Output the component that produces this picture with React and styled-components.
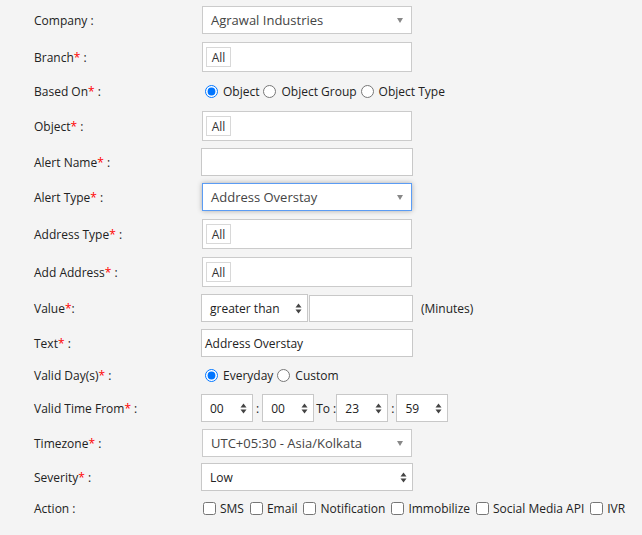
import React from "react";
import styled, { createGlobalStyle, css } from "styled-components";

const Global = createGlobalStyle`
  html, body { margin: 0; padding: 0; background: #f4f4f4; }
  body { font-family: "Open Sans", "Noto Sans", Arial, sans-serif; color: #222; }
`;

const Form = styled.div`
  display: flex;
  flex-direction: column;
  padding: 6px 0 0 34px;
  width: 608px;
  height: 529px;
  background: #f4f4f4;
`;

const Row = styled.div`
  display: flex;
  align-items: center;
  height: ${(p) => p.$h}px;
  margin-bottom: ${(p) => p.$mb || 0}px;
`;

const Label = styled.div`
  width: 167px;
  flex: none;
  font-size: 12px;
  color: #222;
  white-space: nowrap;
`;

const Req = styled.span`
  color: #ff0000;
`;

const Select2Box = styled.div`
  box-sizing: border-box;
  width: 210px;
  height: 28px;
  margin-left: 1px;
  background: #fff;
  border: 1px solid ${(p) => (p.$focus ? "#5b9cf4" : "#cbcbcb")};
  ${(p) =>
    p.$focus &&
    css`
      box-shadow: 0 0 5px rgba(0, 0, 0, 0.3);
    `}
  display: flex;
  align-items: center;
  justify-content: space-between;
  padding: 0 8px 0 8px;
  font-size: 13px;
  color: #444;
`;

const Caret = styled.span`
  width: 0;
  height: 0;
  border-left: 3.5px solid transparent;
  border-right: 3.5px solid transparent;
  border-top: 5px solid #888;
`;

const MultiBox = styled.div`
  box-sizing: border-box;
  width: 210px;
  height: 30px;
  margin-left: 1px;
  background: #fff;
  border: 1px solid #cbcbcb;
  display: flex;
  align-items: center;
  padding-left: 3px;
`;

const Tag = styled.span`
  box-sizing: border-box;
  height: 20px;
  width: 25px;
  justify-content: center;
  border: 1px solid #d8d8d8;
  font-size: 12px;
  color: #333;
  display: flex;
  align-items: center;
`;

const TextInput = styled.div`
  box-sizing: border-box;
  width: ${(p) => p.$w || 212}px;
  height: ${(p) => p.$hh || 28}px;
  margin-left: ${(p) => p.$ml || 0}px;
  background: #fff;
  border: 1px solid #c8c8c8;
  font-size: 12px;
  color: #222;
  display: flex;
  align-items: center;
  padding-left: 3px;
`;

const NativeSelect = styled.div`
  box-sizing: border-box;
  flex: none;
  width: ${(p) => p.$w}px;
  height: 28px;
  background: #fff;
  border: 1px solid #c8c8c8;
  font-size: 12px;
  color: #222;
  display: flex;
  align-items: center;
  justify-content: space-between;
  padding: 0 5px 0 8px;
`;

const Updown = () => (
  <svg width="7" height="11" viewBox="0 0 7 11">
    <path d="M3.5 0.5 L6.5 4.5 L0.5 4.5 Z" fill="#444" />
    <path d="M3.5 10.5 L6.5 6.5 L0.5 6.5 Z" fill="#444" />
  </svg>
);

const Choices = styled.div`
  display: flex;
  align-items: center;
  margin-left: ${(p) => p.$ml || 3}px;
  font-size: 12px;
  color: #222;
`;

const Choice = styled.label`
  display: flex;
  align-items: center;
  margin-right: ${(p) => p.$mr || 3}px;
  white-space: nowrap;
`;

const Radio = styled.input.attrs({ type: "radio" })`
  width: 13px;
  height: 13px;
  margin: 0 5px 0 1px;
  accent-color: #0075ff;
`;

const Check = styled.input.attrs({ type: "checkbox" })`
  width: 13px;
  height: 13px;
  margin: 0 4px 0 0;
`;

const Sep = styled.span`
  font-size: 12px;
  color: #222;
  white-space: nowrap;
  margin: 0 ${(p) => p.$r ?? 3}px 0 ${(p) => p.$l ?? 3}px;
`;

const Suffix = styled.span`
  font-size: 12px;
  color: #222;
  margin-left: 8px;
`;

const Spinner = ({ v }) => (
  <NativeSelect $w={52}>
    {v}
    <Updown />
  </NativeSelect>
);

const L = ({ t, req, colon = " :" }) => (
  <Label>
    {t}
    {req && <Req>*</Req>}
    {colon}
  </Label>
);

export default function App() {
  return (
    <>
      <Global />
      <Form>
        <Row $h={28} $mb={8}>
          <L t="Company" />
          <Select2Box>
            Agrawal Industries
            <Caret />
          </Select2Box>
        </Row>
        <Row $h={30}>
          <L t="Branch" req />
          <MultiBox>
            <Tag>All</Tag>
          </MultiBox>
        </Row>
        <Row $h={39}>
          <L t="Based On" req />
          <Choices>
            <Choice>
              <Radio name="b" defaultChecked />
              Object
            </Choice>
            <Choice>
              <Radio name="b" />
              Object Group
            </Choice>
            <Choice>
              <Radio name="b" />
              Object Type
            </Choice>
          </Choices>
        </Row>
        <Row $h={30} $mb={7}>
          <L t="Object" req />
          <MultiBox>
            <Tag>All</Tag>
          </MultiBox>
        </Row>
        <Row $h={28} $mb={7}>
          <L t="Alert Name" req />
          <TextInput />
        </Row>
        <Row $h={28} $mb={8}>
          <L t="Alert Type" req />
          <Select2Box $focus>
            Address Overstay
            <Caret />
          </Select2Box>
        </Row>
        <Row $h={30} $mb={8}>
          <L t="Address Type" req />
          <MultiBox>
            <Tag>All</Tag>
          </MultiBox>
        </Row>
        <Row $h={30} $mb={7}>
          <L t="Add Address" req />
          <MultiBox>
            <Tag>All</Tag>
          </MultiBox>
        </Row>
        <Row $h={28} $mb={7}>
          <L t="Value" req colon=":" />
          <NativeSelect $w={107}>
            greater than
            <Updown />
          </NativeSelect>
          <TextInput $w={104} $hh={27} $ml={1} />
          <Suffix>(Minutes)</Suffix>
        </Row>
        <Row $h={28}>
          <L t="Text" req />
          <TextInput>Address Overstay</TextInput>
        </Row>
        <Row $h={37}>
          <L t="Valid Day(s)" req />
          <Choices>
            <Choice>
              <Radio name="d" defaultChecked />
              Everyday
            </Choice>
            <Choice>
              <Radio name="d" />
              Custom
            </Choice>
          </Choices>
        </Row>
        <Row $h={28} $mb={7}>
          <L t="Valid Time From" req />
          <Spinner v="00" />
          <Sep>:</Sep>
          <Spinner v="00" />
          <Sep $l={2} $r={0}>To :</Sep>
          <Spinner v="23" />
          <Sep $l={3} $r={2}>:</Sep>
          <Spinner v="59" />
        </Row>
        <Row $h={28} $mb={6}>
          <L t="Timezone" req />
          <Select2Box>
            UTC+05:30 - Asia/Kolkata
            <Caret />
          </Select2Box>
        </Row>
        <Row $h={28}>
          <L t="Severity" req />
          <NativeSelect $w={212}>
            Low
            <Updown />
          </NativeSelect>
        </Row>
        <Row $h={34}>
          <L t="Action" />
          <Choices $ml={2}>
            {["SMS", "Email", "Notification", "Immobilize", "Social Media API", "IVR"].map((x) => (
              <Choice key={x} $mr={6}>
                <Check />
                {x}
              </Choice>
            ))}
          </Choices>
        </Row>
      </Form>
    </>
  );
}
